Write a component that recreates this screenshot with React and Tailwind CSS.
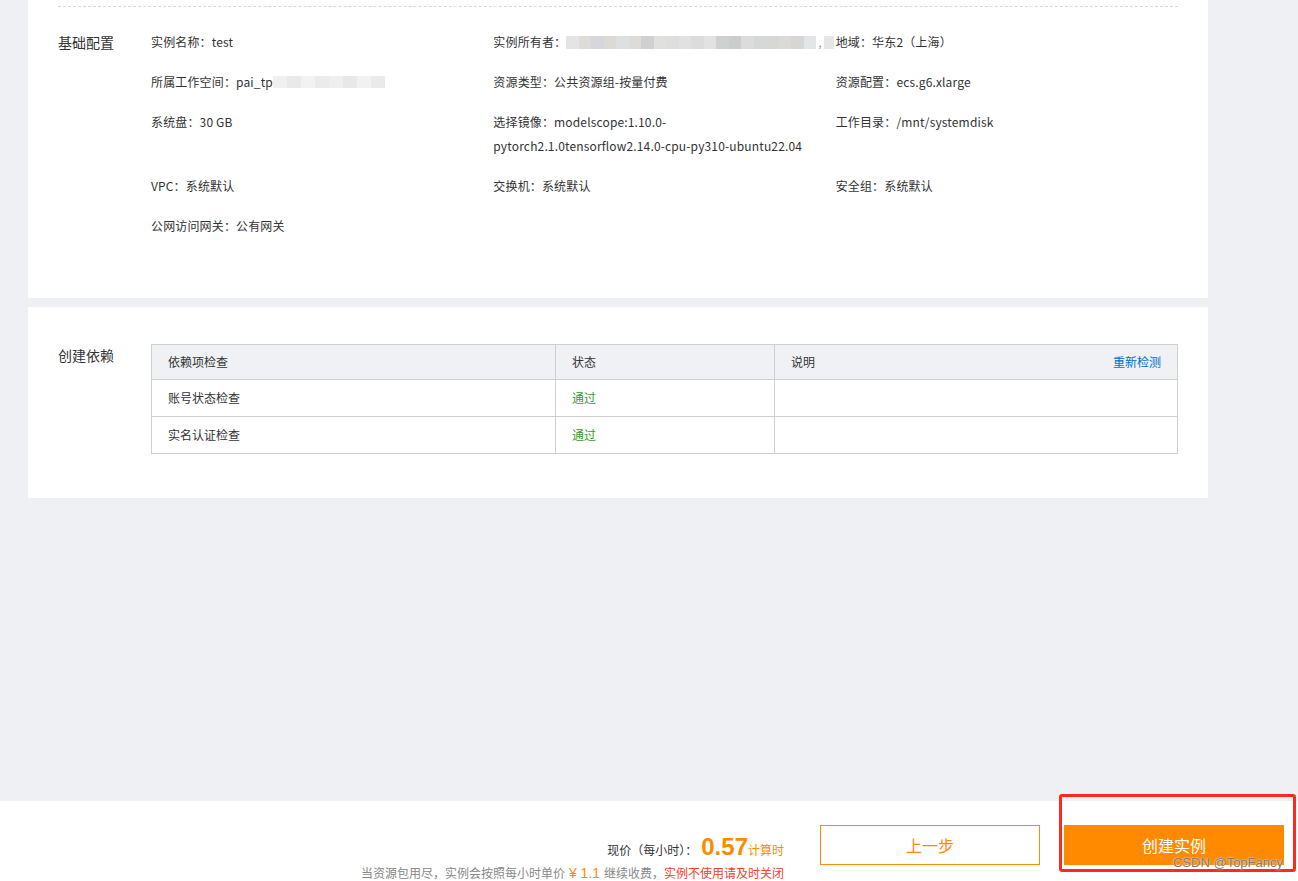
import React from "react";

const blurOwner = ["#e4e4e4", "#dedcd8", "#d7d6dc", "#dcdad4", "#dde0e0", "#dddcd8", "#cfd0d2", "#e0e0de", "#dedfdd", "#e1e1e1", "#dcdcdc", "#e2e2e2", "#cfd1d1", "#c9cdcd", "#dcdcda", "#d5d8d6", "#d6d8d3", "#dcdad7", "#d6d6d4", "#e3e6e8"];
const blurSpace = ["#f0f0f0", "#e9e9e9", "#f2f2f2", "#ebebeb", "#efefef", "#e8e8e8", "#f1f1f1", "#eaeaea"];

function Field({ children }) {
  return <div className="whitespace-nowrap">{children}</div>;
}

export default function App() {
  return (
    <div className="w-[1298px] h-[881px] bg-[#eff0f4] flex flex-col text-[#333] font-['Noto_Sans_CJK_SC',sans-serif] overflow-hidden">
      {/* content */}
      <div className="flex-1 pl-[28px]">
        {/* basic config card */}
        <div className="w-[1180px] bg-white px-[30px] pb-[60px]">
          <div className="pt-[6px]">
            <div className="border-t border-dashed border-[#d9d9d9]"></div>
          </div>
          <div className="flex mt-[23px]">
            <div className="w-[93px] shrink-0 text-[14px] leading-[24px]">基础配置</div>
            <div className="flex-1 grid grid-cols-3 gap-y-4 text-[12px] leading-[24px] tracking-[0.15px]">
              <Field>实例名称：test</Field>
              <Field>
                <span className="inline-flex items-center">
                  实例所有者：
                  <span className="inline-flex h-[13px] w-[250px] blur-[0.6px]">
                    {blurOwner.map((c, i) => (
                      <span key={i} className="flex-1 h-full" style={{ background: c }}></span>
                    ))}
                  </span>
                  <span className="text-[#999] mx-[2px]">,</span>
                  <span className="inline-block w-[10px] h-[13px] bg-[#e6e6e6]"></span>
                </span>
              </Field>
              <Field>地域：华东2（上海）</Field>

              <Field>
                <span className="inline-flex items-center">
                  所属工作空间：pai_tp
                  <span className="inline-flex h-[12px] w-[112px] blur-[0.5px]">
                    {blurSpace.map((c, i) => (
                      <span key={i} className="flex-1 h-full" style={{ background: c }}></span>
                    ))}
                  </span>
                </span>
              </Field>
              <Field>资源类型：公共资源组-按量付费</Field>
              <Field>资源配置：ecs.g6.xlarge</Field>

              <Field>系统盘：30 GB</Field>
              <Field>
                选择镜像：modelscope:1.10.0-
                <br />
                pytorch2.1.0tensorflow2.14.0-cpu-py310-ubuntu22.04
              </Field>
              <Field>工作目录：/mnt/systemdisk</Field>

              <Field>VPC：系统默认</Field>
              <Field>交换机：系统默认</Field>
              <Field>安全组：系统默认</Field>

              <Field>公网访问网关：公有网关</Field>
            </div>
          </div>
        </div>

        {/* dependency card */}
        <div className="mt-[9px] w-[1180px] bg-white px-[30px] pt-[37px] pb-[44px] flex">
          <div className="w-[93px] shrink-0 text-[14px] leading-[22px]">创建依赖</div>
          <div className="flex-1 border border-[#cfcfcf] text-[12px]">
            <div className="flex h-[35px] items-center bg-[#eff1f5] border-b border-[#cfcfcf]">
              <div className="w-[404px] h-full flex items-center px-4 border-r border-[#cfcfcf]">依赖项检查</div>
              <div className="w-[219px] h-full flex items-center px-4 border-r border-[#cfcfcf]">状态</div>
              <div className="flex-1 h-full flex items-center justify-between px-4">
                <span>说明</span>
                <span className="text-[#0070cc]">重新检测</span>
              </div>
            </div>
            {["账号状态检查", "实名认证检查"].map((name, i) => (
              <div key={name} className={`flex ${i === 0 ? "h-[37px] border-b border-[#cfcfcf]" : "h-[36px]"}`}>
                <div className="w-[404px] h-full flex items-center px-4 border-r border-[#cfcfcf]">{name}</div>
                <div className="w-[219px] h-full flex items-center px-4 border-r border-[#cfcfcf] text-[#3a9a2e]">通过</div>
                <div className="flex-1 h-full"></div>
              </div>
            ))}
          </div>
        </div>
      </div>

      {/* footer */}
      <div className="relative h-[80px] bg-white flex items-start justify-end pt-[24px] pr-[14px]">
        <div className="mt-[7px] text-right">
          <div className="leading-[29px] text-[12px] whitespace-nowrap">
            现价（每小时）：
            <span className="font-['Liberation_Sans',Arial,sans-serif] font-bold text-[24px] text-[#ff8a00] ml-[4px]">0.57</span>
            <span className="text-[#ff8a00]">计算时</span>
          </div>
          <div className="leading-[18px] text-[12px] text-[#888] whitespace-nowrap">
            当资源包用尽，实例会按照每小时单价
            <span className="text-[#ff8a00] text-[14px] font-['Liberation_Sans',Arial,sans-serif]"> ¥ 1.1 </span>
            继续收费，<span className="text-[#f5402c]">实例不使用请及时关闭</span>
          </div>
        </div>
        <button className="ml-[36px] w-[220px] h-[40px] border border-[#ff8a00] text-[#ff8a00] text-[16px] bg-white">
          上一步
        </button>
        <button className="ml-[24px] w-[220px] h-[40px] bg-[#ff8a00] text-white text-[16px]">
          创建实例
        </button>

        {/* annotation frame */}
        <div className="absolute left-[1059px] top-[-7px] w-[237px] h-[78px] border-[3px] border-[#ff2a1f] rounded-[3px] pointer-events-none"></div>
        {/* watermark */}
        <div className="absolute right-[15px] top-[55px] text-[13px] leading-[13px] font-['Liberation_Sans',Arial,sans-serif] text-[#7d7d7d] [text-shadow:0_0_2px_#ffffff] pointer-events-none">
          CSDN @TopFancy
        </div>
      </div>
    </div>
  );
}
